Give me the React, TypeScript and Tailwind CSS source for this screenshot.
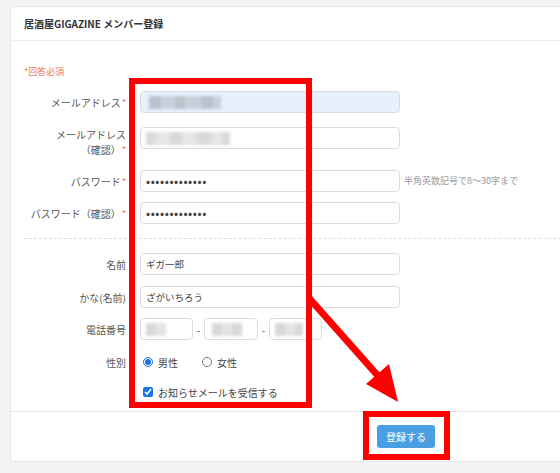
import React from 'react';

const Req = () => <span className="text-[#ef6a4c] text-[9px] align-top ml-[1px]">*</span>;

function Field({ children, className = '' }: { children?: React.ReactNode; className?: string }) {
  return (
    <div
      className={`h-[22px] rounded-[4px] border border-[#dcdcdc] flex items-center pl-[5px] text-[9.5px] text-[#444] overflow-hidden ${className}`}
    >
      {children}
    </div>
  );
}

function Row({ label, children, top = 'mt-0', align = 'items-center' }: { label: React.ReactNode; children: React.ReactNode; top?: string; align?: string }) {
  return (
    <div className={`flex ${align} ${top}`}>
      <div className="w-[102px] shrink-0 text-right text-[10px] leading-[15px] text-[#555]">{label}</div>
      <div className="ml-[14px] flex items-center">{children}</div>
    </div>
  );
}

const Dots = () => <span className="tracking-[0.6px] text-[#444] text-[12px] leading-none">•••••••••••••</span>;

function Blur({ blocks, tone }: { blocks: number[]; tone: string }) {
  return (
    <div className="flex items-center blur-[1.5px]">
      {blocks.map((w, i) => (
        <div key={i} className={`h-[13px] ${tone} ${i % 2 ? 'opacity-70' : ''}`} style={{ width: w }} />
      ))}
    </div>
  );
}

export default function App() {
  return (
    <div className="relative w-[560px] h-[473px] overflow-hidden bg-[#f4f4f4] font-['Noto_Sans_CJK_JP','Noto_Sans',sans-serif]">
      <div className="ml-[10px] mt-[6px] w-[792px] bg-white border border-[#e6e6e6] rounded-[4px]">
        {/* header */}
        <div className="h-[34px] border-b border-[#eeeeee] flex items-center pl-[13px] text-[10px] font-bold text-[#333]">
          居酒屋GIGAZINE メンバー登録
        </div>

        {/* body */}
        <div className="pl-[13px] pr-0 pt-[24px] pb-[11px]">
          <div className="text-[9px] leading-[14px] text-[#f07a5c]">*回答必須</div>

          <Row top="mt-[12px]" label={<>メールアドレス<Req /></>}>
            <Field className="w-[260px] bg-[#e8f0fe] border-[#d8dee8]">
              <div className="ml-[3px]">
                <Blur blocks={[12, 14, 10, 16, 12, 8]} tone="bg-[#bcc2cc]" />
              </div>
            </Field>
          </Row>

          <Row top="mt-[14px]" align="items-start" label={<>メールアドレス<br />（確認）<Req /></>}>
            <Field className="w-[260px]">
              <Blur blocks={[10, 14, 12, 14, 16, 10, 8]} tone="bg-[#dadada]" />
            </Field>
          </Row>

          <div className="flex items-center mt-[13px]">
            <Row label={<>パスワード<Req /></>}>
              <Field className="w-[260px]"><Dots /></Field>
            </Row>
            <span className="ml-[4px] text-[9px] text-[#999]">半角英数記号で8～30字まで</span>
          </div>

          <Row top="mt-[10px]" label={<>パスワード（確認）<Req /></>}>
            <Field className="w-[260px]"><Dots /></Field>
          </Row>

          <div className="mt-[14px] border-t border-dashed border-[#dedede]" />

          <Row top="mt-[14px]" label="名前">
            <Field className="w-[260px]">ギガ一郎</Field>
          </Row>

          <Row top="mt-[11px]" label="かな(名前)">
            <Field className="w-[260px]">ざがいちろう</Field>
          </Row>

          <Row top="mt-[10px]" label="電話番号">
            <Field className="w-[53px]">
              <Blur blocks={[10, 10]} tone="bg-[#d8d8d8]" />
            </Field>
            <span className="w-[11px] text-center text-[10px] text-[#555]">-</span>
            <Field className="w-[54px]">
              <div className="ml-[2px]"><Blur blocks={[10, 10, 10]} tone="bg-[#d8d8d8]" /></div>
            </Field>
            <span className="w-[11px] text-center text-[10px] text-[#555]">-</span>
            <Field className="w-[53px]">
              <Blur blocks={[10, 10, 8]} tone="bg-[#d8d8d8]" />
            </Field>
          </Row>

          <Row top="mt-[14px]" label="性別">
            <label className="flex items-center h-[16px] ml-[3px] text-[10px] text-[#444]">
              <input type="radio" name="sex" defaultChecked className="w-[10px] h-[10px] m-0 accent-[#1a73e8]" />
              <span className="ml-[5px]">男性</span>
            </label>
            <label className="flex items-center h-[16px] ml-[24px] text-[10px] text-[#444]">
              <input type="radio" name="sex" className="w-[10px] h-[10px] m-0 accent-[#1a73e8]" />
              <span className="ml-[5px]">女性</span>
            </label>
          </Row>

          <div className="mt-[14px] h-[16px] flex items-center ml-[119px] text-[10px] text-[#444]">
            <input type="checkbox" defaultChecked className="w-[10px] h-[10px] m-0 accent-[#1a73e8]" />
            <span className="ml-[5px]">お知らせメールを受信する</span>
          </div>
        </div>

        {/* footer */}
        <div className="border-t border-[#e8e8e8] pt-[13px] pb-[13px] flex justify-center">
          <button className="w-[58px] h-[23px] rounded-[3px] bg-[#4a9fe2] text-white text-[10px]">登録する</button>
        </div>
      </div>

      {/* red annotations */}
      <svg className="absolute inset-0 pointer-events-none" width="560" height="473" viewBox="0 0 560 473">
        <rect x="132" y="81" width="177" height="324" fill="none" stroke="#ff0000" strokeWidth="6" />
        <rect x="366" y="414" width="81" height="43" fill="none" stroke="#ff0000" strokeWidth="6" />
        <line x1="309" y1="298" x2="379" y2="377" stroke="#ff0000" strokeWidth="7" />
        <polygon points="366,384 389,364 398,402" fill="#ff0000" />
      </svg>
    </div>
  );
}
